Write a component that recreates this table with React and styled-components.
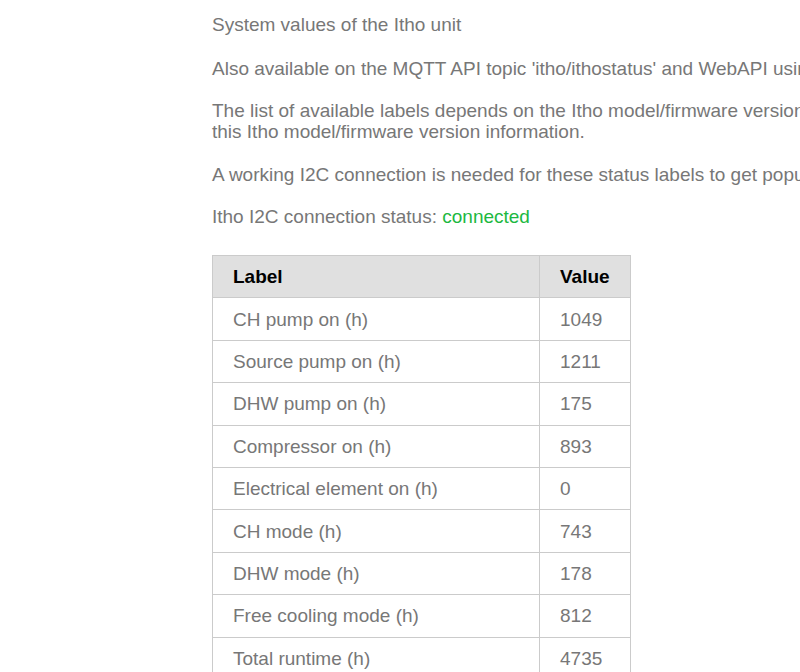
import React from 'react';
import styled, { createGlobalStyle } from 'styled-components';

const GlobalStyle = createGlobalStyle`
  html, body {
    margin: 0;
    padding: 0;
    background: #fff;
    overflow: hidden;
  }
  body {
    font-family: "Liberation Sans", Arial, sans-serif;
  }
`;

const Content = styled.div`
  width: 1400px;
  padding: 0 0 0 212px;
  color: #777;
  font-size: 19px;
  line-height: 21px;
`;

const Para = styled.p`
  margin: ${(p) => (p.$first ? '14px 0 23px' : '0 0 21.3px')};
  white-space: nowrap;
`;

const Status = styled.span`
  color: #1cb841;
`;

const Table = styled.table`
  margin-top: 28.5px;
  border-collapse: collapse;
  border-spacing: 0;
  border: 1px solid #cbcbcb;
  width: 419px;
  font-size: 19px;
  white-space: nowrap;
`;

const Head = styled.thead`
  background: #e0e0e0;
  color: #000;
  text-align: left;
`;

const Th = styled.th`
  padding: 10px 20px;
  height: 21px;
  font-weight: bold;
  border-left: 1px solid #cbcbcb;
  width: ${(p) => p.$w || 'auto'};
`;

const Td = styled.td`
  padding: 10px 20px;
  height: 21.4px;
  border-left: 1px solid #cbcbcb;
  border-top: 1px solid #cbcbcb;
`;

const rows = [
  ['CH pump on (h)', 1049],
  ['Source pump on (h)', 1211],
  ['DHW pump on (h)', 175],
  ['Compressor on (h)', 893],
  ['Electrical element on (h)', 0],
  ['CH mode (h)', 743],
  ['DHW mode (h)', 178],
  ['Free cooling mode (h)', 812],
  ['Total runtime (h)', 4735],
];

export default function App() {
  return (
    <>
      <GlobalStyle />
      <Content>
        <Para $first>System values of the Itho unit</Para>
        <Para>Also available on the MQTT API topic 'itho/ithostatus' and WebAPI using the URL /api.html?get=ithostatus</Para>
        <Para>
          The list of available labels depends on the Itho model/firmware version. Please report unknown values and
          <br />
          this Itho model/firmware version information.
        </Para>
        <Para>A working I2C connection is needed for these status labels to get populated.</Para>
        <Para>
          Itho I2C connection status: <Status>connected</Status>
        </Para>
        <Table>
          <Head>
            <tr>
              <Th>Label</Th>
              <Th $w="50px">Value</Th>
            </tr>
          </Head>
          <tbody>
            {rows.map(([label, value]) => (
              <tr key={label}>
                <Td>{label}</Td>
                <Td>{value}</Td>
              </tr>
            ))}
          </tbody>
        </Table>
      </Content>
    </>
  );
}
